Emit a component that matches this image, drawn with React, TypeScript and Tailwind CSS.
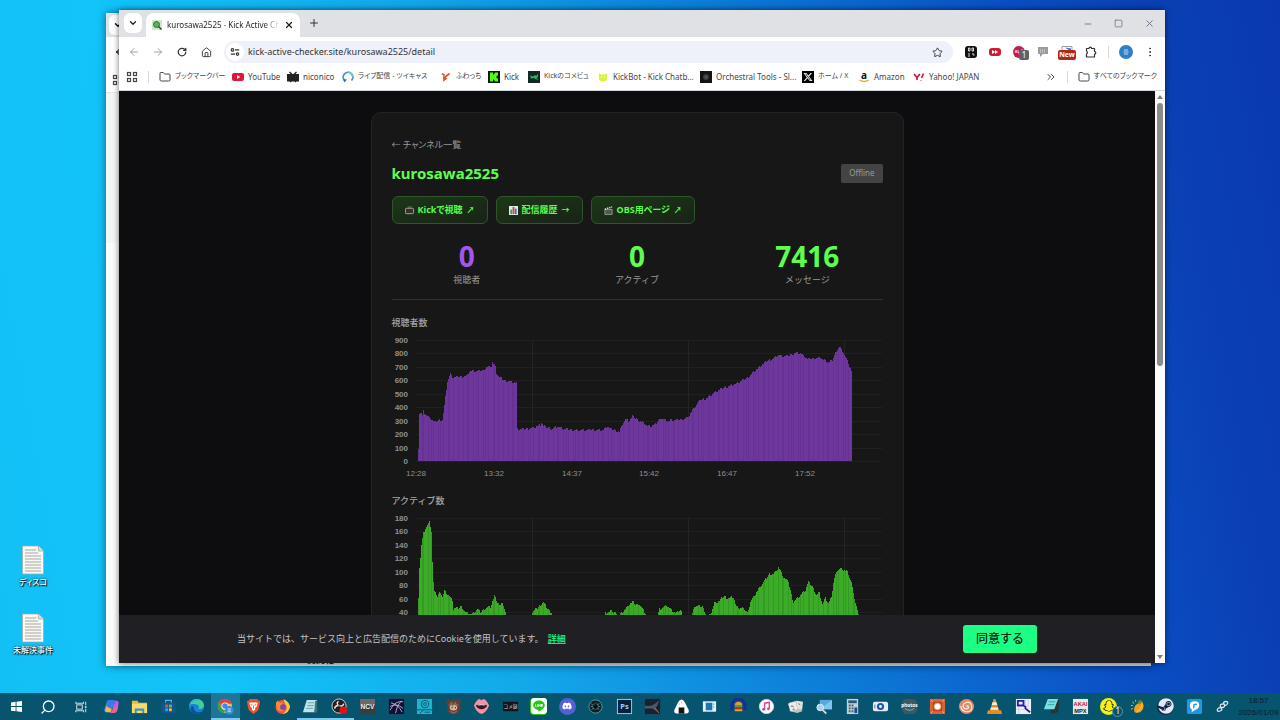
import type { ReactNode } from 'react';
import {
  ArrowLeft,
  ArrowRight,
  ChevronDown,
  ChevronsRight,
  EllipsisVertical,
  Folder,
  House,
  Minus,
  Plus,
  RotateCw,
  Search,
  Square,
  Star,
  X,
} from 'lucide-react';
import { FaDiscord, FaLine, FaSnapchat, FaSteam, FaXTwitter } from 'react-icons/fa6';

type Point = [number, number];

interface ChartProps {
  title: string;
  points: Point[];
  max: number;
  step: number;
  color: string;
  stripe: string;
  jitter: number;
}

interface BookmarkItem {
  label: string;
  width: string;
  icon: ReactNode;
}

interface TaskItem {
  name: string;
  icon: ReactNode;
  state?: 'active' | 'open';
}

const viewers: Point[] = [
  [0, 100], [1, 360], [3, 360], [4, 335], [5, 376], [6, 360], [8, 340], [11, 322], [13, 310], [16, 287],
  [19, 300], [22, 310], [24, 310], [26, 408], [27, 480], [29, 596], [32, 645], [34, 620], [36, 625], [48, 632],
  [51, 668], [65, 672], [68, 703], [73, 705], [74, 733], [77, 700], [78, 653], [81, 623], [85, 603], [95, 588],
  [98, 578], [99, 240], [105, 236], [115, 250], [122, 267], [123, 290], [125, 258], [134, 240], [139, 260], [144, 240],
  [155, 230], [169, 226], [175, 236], [185, 227], [189, 262], [192, 240], [201, 220], [204, 272], [207, 315], [210, 295],
  [214, 330], [220, 304], [225, 285], [229, 260], [232, 260], [237, 270], [242, 322], [249, 300], [262, 308], [269, 322],
  [272, 354], [277, 409], [282, 454], [289, 471], [295, 504], [305, 546], [319, 578], [329, 620], [339, 688], [349, 745],
  [355, 765], [359, 787], [369, 778], [377, 807], [382, 800], [389, 757], [402, 770], [409, 733], [414, 745], [417, 810],
  [421, 852], [425, 807], [429, 745], [433, 670],
];

const actives: Point[] = [
  [0, 63], [1, 108], [2, 121], [3, 140], [5, 158], [7, 165], [9, 169], [11, 174], [13, 161], [14, 114],
  [15, 84], [16, 69], [19, 64], [22, 71], [24, 63], [26, 71], [30, 66], [34, 57], [35, 45], [40, 45],
  [43, 49], [47, 40], [54, 37], [59, 44], [62, 40], [67, 47], [72, 48], [76, 64], [79, 55], [82, 48],
  [84, 55], [87, 39], [88, 24], [113, 24], [114, 37], [117, 48], [119, 45], [122, 50], [125, 54], [129, 45],
  [133, 40], [134, 24], [186, 24], [187, 38], [192, 41], [198, 39], [199, 24], [201, 24], [202, 38], [207, 44],
  [210, 50], [214, 55], [217, 52], [221, 52], [225, 43], [229, 34], [231, 22], [238, 28], [241, 45], [248, 50],
  [253, 43], [258, 38], [262, 43], [267, 31], [273, 31], [276, 49], [284, 48], [289, 33], [293, 40], [296, 53],
  [301, 56], [305, 64], [310, 61], [315, 63], [318, 47], [324, 46], [329, 39], [332, 56], [341, 76], [346, 86],
  [351, 97], [356, 98], [360, 107], [365, 92], [370, 85], [373, 66], [375, 55], [379, 61], [384, 69], [387, 73],
  [390, 85], [394, 78], [398, 66], [401, 69], [404, 52], [407, 61], [410, 53], [413, 61], [415, 84], [418, 102],
  [422, 105], [429, 100], [433, 84], [435, 66], [439, 43], [442, 30],
];

const times = ['12:28', '13:32', '14:37', '15:42', '16:47', '17:52'];

function valueAt(points: Point[], x: number) {
  const next = points.findIndex((p) => p[0] >= x);
  if (next <= 0) return points[0][1];
  const [x0, v0] = points[next - 1];
  const [x1, v1] = points[next];
  return v0 + ((v1 - v0) * (x - x0)) / (x1 - x0);
}

function Chart({ title, points, max, step, color, stripe, jitter }: ChartProps) {
  const top = 7;
  const height = 121;
  const ticks = Array.from({ length: max / step + 1 }, (_, i) => max - i * step);
  const last = points[points.length - 1][0];
  const bars = Array.from({ length: last + 1 }, (_, i) => {
    const noise = ((((i >> 1) * 37) % 11) - 5) / 5;
    return Math.max(0, valueAt(points, i) + noise * jitter);
  });

  return (
    <section>
      <h2 className="h-4 text-[9px] leading-4 font-medium text-[#a3a3a3]">{title}</h2>
      <svg viewBox="0 0 491 146" className="mt-0.5 block w-full" role="img" aria-label={title}>
        {ticks.map((tick, i) => {
          const y = top + Math.round((i * height) / (ticks.length - 1));
          return (
            <g key={tick}>
              <line x1="23" x2="490" y1={y + 0.5} y2={y + 0.5} stroke="#202020" />
              <text x="16" y={y + 3} textAnchor="end" fontSize="8" fontWeight="bold" fill="#8f8f8f" fontFamily="Liberation Sans, sans-serif">
                {tick}
              </text>
            </g>
          );
        })}
        {[140, 296, 452].map((x) => (
          <line key={x} x1={x + 0.5} x2={x + 0.5} y1={top} y2={top + height} stroke="#242424" />
        ))}
        {bars.map((value, i) => {
          const h = (value / max) * height;
          return (
            <rect key={i} x={26 + i} y={top + height - h} width="1" height={h} fill={(i * 7) % 5 === 0 || i % 9 === 4 ? stripe : color} shapeRendering="crispEdges" />
          );
        })}
        {times.map((time, i) => (
          <text key={time} x={24 + Math.round(i * 77.8)} y="143" textAnchor="middle" fontSize="8" fill="#8f8f8f" fontFamily="Liberation Sans, sans-serif">
            {time}
          </text>
        ))}
      </svg>
    </section>
  );
}

/* Small drawings */

function Icon({ children, box = 18 }: { children: ReactNode; box?: number }) {
  return (
    <svg viewBox={`0 0 ${box} ${box}`} className="size-full" aria-hidden="true">
      {children}
    </svg>
  );
}

function AppsGrid() {
  return (
    <Icon box={12}>
      <g fill="none" stroke="#444746" strokeWidth="1.2">
        <rect x="1.5" y="1.5" width="3" height="3" />
        <rect x="7.5" y="1.5" width="3" height="3" />
        <rect x="1.5" y="7.5" width="3" height="3" />
        <rect x="7.5" y="7.5" width="3" height="3" />
      </g>
    </Icon>
  );
}

const bookmarks: BookmarkItem[] = [
  { label: 'ブックマークバー', width: 'w-[73px] text-[7px]', icon: <Folder className="size-3 text-[#444746]" strokeWidth={2} /> },
  {
    label: 'YouTube',
    width: 'w-[55px] text-[8px]',
    icon: <Icon box={12}><rect y="2" width="12" height="8" rx="2" fill="#e0143c" /><path d="M5 4l3.200 2L5 8z" fill="#fff" /></Icon>,
  },
  {
    label: 'niconico',
    width: 'w-[55px] text-[8px]',
    icon: <Icon box={12}><path d="M0 3h3.500L2 1.200 3 .5 5.500 3h1L9 .5l1 .7L8.500 3H12v7.500H9.500l-1 1-1-1h-3l-1 1-1-1H0z" fill="#222" /></Icon>,
  },
  {
    label: 'ライブ配信 - ツイキャス',
    width: 'w-[98px] text-[7px]',
    icon: (
      <Icon box={12}>
        <path d="M2.500 9.500A4.800 4.800 0 1 1 9.500 9.500" fill="none" stroke="#3d8fd1" strokeWidth="1.800" />
        <path d="M6 1.200A4.800 4.800 0 0 1 10.800 6" fill="none" stroke="#6cc7c0" strokeWidth="1.800" />
        <path d="M1 8l4 .5-2.500 3z" fill="#2f6fb7" />
      </Icon>
    ),
  },
  {
    label: 'ふわっち',
    width: 'w-[48px] text-[7px]',
    icon: <Icon box={12}><path d="M2.500 3l1.500 1M5 6l4-3M4 6v3l2-1.500" stroke="#e2552f" strokeWidth="1.800" fill="none" strokeLinecap="round" /></Icon>,
  },
  {
    label: 'Kick',
    width: 'w-[40px] text-[8px]',
    icon: <Icon box={12}><rect width="12" height="12" fill="#0a1a05" /><path d="M2 1.500h3v2h1v-1h1v-1h3v3H9v1H8v1h1v1h1v3H7v-1H6v-1H5v2H2z" fill="#53fc18" /></Icon>,
  },
  {
    label: 'Kickのコメビュ',
    width: 'w-[69px] text-[7px]',
    icon: <Icon box={12}><rect width="12" height="12" fill="#12292a" /><path d="M2 4.500l3 1 2-1.500 1 1 2-2v3L8.500 7l2 2-3-1-1.500-1-3 .5z" fill="#2fb457" /></Icon>,
  },
  {
    label: 'KickBot - Kick Chatb...',
    width: 'w-[103px] text-[8px]',
    icon: <Icon box={12}><path d="M2 2l2 1.500h4L10 2v7l-2 1H4L2 9z" fill="#d5f53b" /><path d="M4 6h1M7 6h1" stroke="#fff" /></Icon>,
  },
  {
    label: 'Orchestral Tools - Sl...',
    width: 'w-[102px] text-[8px]',
    icon: <Icon box={12}><rect width="12" height="12" fill="#141414" /><circle cx="6" cy="6" r="3" fill="#3a3a3a" /><circle cx="6" cy="6" r="1.500" fill="#555" /></Icon>,
  },
  {
    label: 'ホーム / X',
    width: 'w-[56px] text-[7px]',
    icon: <span className="flex size-3 items-center justify-center bg-black text-white"><FaXTwitter className="size-2.5" /></span>,
  },
  {
    label: 'Amazon',
    width: 'w-[55px] text-[8px]',
    icon: (
      <Icon box={12}>
        <text x="6" y="8" textAnchor="middle" fontSize="10" fontWeight="bold" fill="#111" fontFamily="Noto Sans, sans-serif">a</text>
        <path d="M1.500 9q4.500 3 9 .2" fill="none" stroke="#d6b62e" strokeWidth="1.400" />
      </Icon>
    ),
  },
  {
    label: 'Yahoo! JAPAN',
    width: 'w-[80px] text-[8px]',
    icon: <Icon box={12}><path d="M1 3l3 3.500V9M7 3L4 6.500M10.500 2.500L8.500 7M8 9v.5" stroke="#c2113a" strokeWidth="1.600" fill="none" /></Icon>,
  },
];

const tasks: TaskItem[] = [
  {
    name: 'Copilot',
    icon: (
      <Icon>
        <path d="M6 2h6l-3 13H4c-3 0-3-2-2-5L4 4q.6-2 2-2z" fill="#2a8ee8" />
        <path d="M4 8L2.500 12q-1 3 2 3H8l1-3z" fill="#f4b942" />
        <path d="M12 3h2q3 0 2.500 3L15 13q-1 3-3 3H7l2.500-2z" fill="#c45be0" />
        <path d="M12 10l4-1-1 4q-1 3-3 3H8z" fill="#f0608a" />
        <path d="M6 2h5q1.500 0 2 2l.5 2H9L7.500 11 4 9z" fill="#3f6df0" opacity=".7" />
      </Icon>
    ),
  },
  {
    name: 'エクスプローラー',
    icon: <Icon><path d="M1 3h6l1 2h9v11H1z" fill="#e8b93a" /><path d="M1 6h16v10H1z" fill="#fbd968" /><path d="M4 11h10v5h-2v-2.500H6V16H4z" fill="#3c8fc4" /></Icon>,
  },
  {
    name: 'Microsoft Store',
    icon: (
      <Icon>
        <path d="M6 5V2.500h6V5" fill="none" stroke="#49b4ea" strokeWidth="1.300" />
        <path d="M1.500 5h15v9q0 2-2 2h-11q-2 0-2-2z" fill="#14558f" />
        <path d="M5.500 7h3v3h-3z" fill="#f05133" /><path d="M9.500 7h3v3h-3z" fill="#80bc2a" />
        <path d="M5.500 11h3v3h-3z" fill="#2aa5ea" /><path d="M9.500 11h3v3h-3z" fill="#fcbc1a" />
      </Icon>
    ),
  },
  {
    name: 'Edge',
    icon: (
      <Icon>
        <circle cx="9" cy="9" r="8" fill="#1583d6" />
        <path d="M1.500 8Q3 1 9 1c5 0 8 3.500 8 7 0 3-3 4-6 3.500 1.500-2 0-5-3-5S2.500 6 1.500 8z" fill="#43cf92" />
        <path d="M1.500 8Q3 1 9 1c2 0 4 1 5 2-5-1.500-9 0-12.500 5z" fill="#2bb6dc" />
        <path d="M6 9c-1 5 5 8 9 5-4 5-13 3-12-3 .3-2 1.500-3 3-2z" fill="#0c4f9e" />
      </Icon>
    ),
  },
  {
    name: 'Chrome',
    state: 'active',
    icon: (
      <Icon>
        <circle cx="8.500" cy="8.500" r="7.500" fill="#f2c130" />
        <path d="M1.500 5a8 8 0 0 1 14.500 1H8.500L5.500 10z" fill="#de4437" />
        <path d="M1.500 5L6 12l2.500 1-1 3A7.500 7.500 0 0 1 1.500 5z" fill="#2ea255" />
        <circle cx="8.500" cy="8.500" r="3.800" fill="#fff" /><circle cx="8.500" cy="8.500" r="2.900" fill="#4285f4" />
        <circle cx="13" cy="13" r="4.500" fill="#2f8fdb" /><path d="M11 11.500h4M11.500 13h3M11 14.500h4" stroke="#d6ecfb" strokeWidth=".8" />
      </Icon>
    ),
  },
  {
    name: 'Brave',
    icon: <Icon><path d="M5 1h8l1.500 2 1.500.5-.5 3L14 13l-5 4-5-4L2.500 6.500l-.5-3L3.500 3z" fill="#f0502c" /><path d="M4.500 5l3-.5L9 5l1.500-.5 3 .5-1 4-2 1.500L11 12l-2 2-2-2 .5-1.500-2-1.500z" fill="#fff" /><path d="M6 7l2 .5M12 7l-2 .5M9 8v3" stroke="#f0502c" /></Icon>,
  },
  {
    name: 'Firefox',
    icon: (
      <Icon>
        <circle cx="9" cy="9.500" r="7.500" fill="#f5533d" />
        <path d="M10 1q6 3 7 8-1 7-8 8 6-4 4-9-2-2-3-7z" fill="#fdc93b" />
        <path d="M2 5l2-2 2 2h4L8 7l3 1q-1 3-3 2-1 3 3 3-5 3-8-2z" fill="#ff8a2c" />
        <circle cx="9.500" cy="9.500" r="3" fill="#7747c9" />
      </Icon>
    ),
  },
  { name: 'メモ帳', state: 'open', icon: <Icon><path d="M5 2h11l-3 13H1z" fill="#bfe3e6" /><path d="M14 3l2 0v12l-3 1z" fill="#45717a" /><path d="M6 5h7M5.500 8h7M4.500 11h7" stroke="#5fa7b1" /></Icon> },
  {
    name: 'OBS',
    state: 'open',
    icon: <Icon><circle cx="8.500" cy="8.500" r="7.500" fill="#241f22" stroke="#d0d0d0" /><path d="M8 3.500q-2.500 1.500-.5 4M8 8q-4 0-4 3.500M9 8q3.500 1.500 4.500-2" fill="none" stroke="#e8e8e8" strokeWidth="1.500" /><circle cx="13" cy="13" r="4" fill="#e50f13" /></Icon>,
  },
  { name: 'NCV', icon: <Icon><rect x="1" y="1" width="16" height="16" fill="#3b3b3b" /><rect x="1" y="1" width="16" height="6" fill="#6a6a6a" /><text x="9" y="12" textAnchor="middle" fontSize="7" fontWeight="bold" fill="#eee" fontFamily="Liberation Sans, sans-serif">NCV</text></Icon> },
  { name: 'スケッチ', icon: <Icon><rect x="1" y="1" width="16" height="16" fill="#120f33" /><path d="M2 13Q8 2 16 4M3 5q8 2 12 10M2 9q7-4 14 2M8 16q1-8 6-13" fill="none" stroke="#c5bde8" strokeWidth=".9" /></Icon> },
  { name: 'カメラ', icon: <Icon><rect x="1" y="1" width="16" height="16" fill="#20b1cb" /><circle cx="9.500" cy="6.500" r="4" fill="none" stroke="#0a5a74" /><circle cx="9.500" cy="6.500" r="1.500" fill="none" stroke="#0a5a74" /><path d="M1 12.500h16M4 16l4-3M9 15h6" stroke="#0a5a74" /></Icon> },
  { name: 'キャラクター', icon: <Icon><path d="M1 5l2-3 3 0 3-1 4 1 3-1 1 4-1 2 1 4-3 5-4 1H6l-3-2-1-4 1-3z" fill="#5b4237" /><ellipse cx="9" cy="10" rx="4" ry="3.200" fill="#e0b49c" /><path d="M4 8l3-3 1 3 3-3 1 3 2-1M5 14l4 2 4-2" stroke="#8b6550" strokeWidth="1.500" fill="none" /><path d="M7.500 9.500v1.500M11 9.500v1.500" stroke="#222" /></Icon> },
  { name: 'リップ', icon: <Icon><path d="M1 8q3-7 6-7l2 1.500L11 1q3 0 6 7-3 8-8 9-5-1-8-9z" fill="#f492a5" /><path d="M3 8q6-3 12 0-2 4-6 4T3 8z" fill="#3c1626" /><path d="M5.500 7.500q3.500-1 7 0" stroke="#fff" fill="none" /></Icon> },
  { name: 'コメント', icon: <Icon><rect x="1" y="4" width="16" height="10" fill="#151515" /><text x="9" y="11" textAnchor="middle" fontSize="5" fill="#ddd" fontFamily="Noto Sans CJK JP, sans-serif">コメ録</text></Icon> },
  { name: 'LINE', icon: <span className="flex size-full items-center justify-center rounded-sm bg-[#22c714] text-white"><FaLine className="size-4" /></span> },
  { name: 'Discord', icon: <span className="flex size-full items-center justify-center rounded-full bg-[#5360d8] text-white"><FaDiscord className="size-2.5" /></span> },
  { name: 'レンズ', icon: <Icon><circle cx="9" cy="9" r="7" fill="#121e22" stroke="#4e9aa0" /><circle cx="9" cy="9" r="3" fill="#0a1114" stroke="#37666b" /><path d="M4 6l2 1M4 9h2M5 12l2-1M13 6l-2 1M14 9h-2M13 12l-2-1" stroke="#7fb6b0" strokeWidth=".7" /></Icon> },
  { name: 'Photoshop', icon: <Icon><rect x="1.500" y="1.500" width="15" height="15" fill="#04203a" stroke="#8fd0f5" /><text x="9" y="12" textAnchor="middle" fontSize="8" fontWeight="bold" fill="#9bd6f8" fontFamily="Noto Sans, sans-serif">Ps</text></Icon> },
  { name: 'スタジオ', icon: <Icon><rect x="1" y="1" width="16" height="16" fill="#17222e" /><path d="M1 8q8 2 15-6-2 8-4 8l4 6-7-5-8 0z" fill="#49586a" /><path d="M11 10l5 6" stroke="#c3663f" /></Icon> },
  { name: 'おにぎり', icon: <Icon><path d="M9 1.500q2 0 3.500 3l4 8q1 4-2.500 4H4q-3.500 0-2.500-4l4-8q1.500-3 3.500-3z" fill="#fff" /><path d="M6 10h6v6.500H6z" fill="#151515" /><path d="M9 4v2M7 6v1" stroke="#d6bda0" /></Icon> },
  { name: 'ウィンドウ', icon: <Icon><rect x="2" y="3.500" width="14" height="11" fill="#e7f1f7" /><rect x="5" y="5" width="7" height="8" fill="#1577b5" /><path d="M13.500 6v1M13.500 9v1" stroke="#385c70" /></Icon> },
  { name: 'バーガー', icon: <Icon><path d="M2 13V8a7 7 0 0 1 14 0v5" fill="none" stroke="#172d96" strokeWidth="3" /><path d="M5 8q0-4 4-4t4 4z" fill="#e39b3c" /><path d="M5 9h8" stroke="#53a944" strokeWidth="1.500" /><path d="M5 11h8" stroke="#c92d27" strokeWidth="2" /><path d="M5 12h8v2H5z" fill="#eaa33f" /></Icon> },
  { name: 'iTunes', icon: <Icon><circle cx="9" cy="9" r="7.500" fill="#fff" stroke="#cfd8ee" /><path d="M7 12V5.500l5-1V11" fill="none" stroke="#de3f9a" strokeWidth="1.500" /><circle cx="6" cy="12" r="1.500" fill="#8b4be3" /><circle cx="11" cy="11.500" r="1.500" fill="#e8445c" /></Icon> },
  { name: 'カード', icon: <Icon><path d="M2 5l8-2 6 2v9l-5 2-8-2z" fill="#bfc2bd" /><path d="M1 6l8-2 2 8-7 2z" fill="#ececea" /><path d="M10 3l7 1-1 8-5-1z" fill="#e4e4df" /><path d="M4 9q2-2 3 1M12 6l2 1M6 12h2" stroke="#666" fill="none" /></Icon> },
  { name: 'リモート検索', icon: <Icon><rect x="5" y="2" width="13" height="10" fill="#55a9dc" /><path d="M5 12l13-10v10z" fill="#83c6ed" /><circle cx="5.500" cy="10" r="3.500" fill="#a7d2ea" stroke="#e3eef5" /><path d="M8 12.500l4 4" stroke="#ced8dd" strokeWidth="2" /></Icon> },
  { name: '電卓', icon: <Icon><rect x="3" y="1" width="12" height="16" fill="#bfd2dc" /><rect x="4.500" y="2.500" width="9" height="3" fill="#2b5a78" /><path d="M5 8h2M8 8h2M5 11h2M8 11h2M5 14h2M8 14h2" stroke="#52616a" strokeWidth="2" /><rect x="11" y="10" width="3" height="6" fill="#1c4d8a" /></Icon> },
  { name: 'レコーダー', icon: <Icon><rect x="1" y="4" width="16" height="10" rx="2" fill="#e6ecf7" /><circle cx="9" cy="9" r="3.800" fill="#2154b5" /><circle cx="9" cy="9" r="1.500" fill="#fff" /><path d="M3 7v4" stroke="#4b6fb5" /></Icon> },
  { name: 'Amazon Photos', icon: <Icon><rect x="1" y="1" width="16" height="16" rx="5" fill="#3d5860" /><text x="9" y="9" textAnchor="middle" fontSize="5" fontWeight="bold" fill="#fff" fontFamily="Noto Sans, sans-serif">photos</text><path d="M4 11q5 4 10 0" stroke="#51c2c1" fill="none" /></Icon> },
  { name: 'ブラシ', icon: <Icon><rect x="1" y="1" width="16" height="16" fill="#dd6234" /><rect x="4" y="4" width="10" height="10" fill="#b9441f" /><circle cx="9" cy="9" r="3.500" fill="#fff" stroke="#f2a36d" /><path d="M2 2l2 2M16 2l-2 2M2 16l2-2M16 16l-2-2" stroke="#f4b58b" /></Icon> },
  { name: '渦巻き', icon: <Icon><circle cx="9" cy="9" r="8" fill="#e58868" /><path d="M9 9q1.500-1.500 2 .5t-2.500 2-3-3 4-4 5 4.500-5 5.500-6.500-6" fill="none" stroke="#fff0e8" strokeWidth="1.200" /></Icon> },
  { name: 'VLC', icon: <Icon><path d="M2 13h14l1 4H1z" fill="#e58b22" /><path d="M8 1h2l4 13H4z" fill="#f08c1c" /><path d="M7 4.500h4l1 3H6zM5.300 10h7.400l.6 2.500H4.500z" fill="#f5ede2" /></Icon> },
  { name: 'エディター', icon: <Icon><rect x="1" y="1" width="16" height="16" fill="#edf0fa" /><path d="M3 3h6v5H3zM9 8l2 1v2l5 4" fill="none" stroke="#271c9c" strokeWidth="2" /><path d="M11 1v7M14 1v9M1 12h9M4 9v8" stroke="#b6b9d8" strokeWidth=".6" /></Icon> },
  { name: '付箋', icon: <Icon><path d="M5 2h12l-1 13-7 2z" fill="#263538" /><path d="M5 1h11l-4 11H1z" fill="#7cdde3" /><path d="M6 4h7M5 7h7" stroke="#3a9fa8" /></Icon> },
  { name: 'AKAI MPX', icon: <Icon><rect x="1" y="1" width="16" height="16" fill="#e9e9e9" /><text x="9" y="8.500" textAnchor="middle" fontSize="6" fontWeight="bold" fill="#c4173a" fontFamily="Liberation Sans, sans-serif">AKAI</text><text x="9" y="15.500" textAnchor="middle" fontSize="6" fontWeight="bold" fill="#222" fontFamily="Liberation Sans, sans-serif">MPX</text></Icon> },
  {
    name: 'Snapchat',
    icon: (
      <span className="relative flex size-full items-center justify-center rounded-full bg-[#f5f016] text-black">
        <FaSnapchat className="size-3" />
        <span className="absolute -right-1.5 -bottom-0.5 flex size-[11px] items-center justify-center rounded-full border border-[#5c9aab] bg-[#0d5268] text-[8px] leading-none text-white">1</span>
      </span>
    ),
  },
  { name: 'マンゴー', icon: <Icon><path d="M14 4q3 5 0 9t-8 2Q4 9 9 6q3-2 5-2z" fill="#f0a020" /><path d="M9 4q4-4 5 0l-3 3z" fill="#5c8b31" /><path d="M4 4l1 2M2 8h2M2 12l2-1M7 2v2" stroke="#f2c037" /><path d="M8 15q5-2 6-8" stroke="#f9cd48" fill="none" /></Icon> },
  { name: 'Steam', icon: <span className="flex size-full items-center justify-center rounded-full bg-[#10254b] text-[#e2eaf1]"><FaSteam className="size-4" /></span> },
  { name: 'チャット', icon: <Icon><rect x="1" y="1" width="16" height="16" rx="2" fill="#2198e2" /><path d="M9 3.500q5 0 5 4T9 13l-3 2 .3-2.500Q4 11 4 8q0-4.500 5-4.500z" fill="#fff" /><path d="M8 11l.5-4 3-.5" stroke="#2198e2" strokeWidth="1.400" fill="none" /></Icon> },
  { name: 'リンク', icon: <Icon><path d="M4 14q-1.500-2 1-3.500l3 0q1 2-1 3t-3 .5zM7 10q-1-3 1-3.500h3q1 2-1 3.500zM10 6.500Q9.500 4 12 3.500q3 0 2.500 2T12 8" fill="none" stroke="#d9e9ee" strokeWidth="1.300" /></Icon> },
];

function DesktopFile({ name }: { name: string }) {
  return (
    <button className="flex w-16 flex-col items-center gap-px">
      <svg viewBox="0 0 22 30" className="h-[30px] w-[22px]" aria-hidden="true">
        <path d="M.5 1h16l5 5v23H.5z" fill="#f7f7f5" stroke="#aaa69c" strokeWidth=".7" />
        <path d="M16.500 1v5h5" fill="#dcdcd8" stroke="#aaa69c" strokeWidth=".7" />
        <path d="M3 5h11M3 8h13M3 11h16M3 14h16M3 17h16M3 20h16M3 23h16M3 26h16" stroke="#aba79f" />
      </svg>
      <span className="text-[8px] leading-3 font-medium whitespace-nowrap text-white [font-feature-settings:'palt'] [text-shadow:1px_1px_1px_#000,0_0_2px_#000]">{name}</span>
    </button>
  );
}

function BackWindow() {
  return (
    <div className="absolute top-[13px] right-[129px] bottom-[27px] left-[106px] flex flex-col overflow-hidden bg-white shadow-[0_0_8px_rgba(0,0,0,0.5)]">
      <div className="flex h-6 items-center bg-[#dfe1e5] pl-[3px]">
        <span className="flex h-5 w-[18px] items-center justify-center rounded-md bg-white"><ChevronDown className="size-2.5" strokeWidth={3} /></span>
      </div>
      <div className="flex h-[30px] items-center pl-2"><ArrowLeft className="size-3" /></div>
      <div className="flex h-[26px] items-center border-b border-gray-200 pl-1.5"><span className="size-3"><AppsGrid /></span></div>
      <div className="h-[150px] bg-[#f5f5f5]" />
      <div className="flex flex-1 items-end gap-1.5 bg-gradient-to-r from-white from-0% via-[#f4f4f4] via-2% to-[#c8ccd0] to-30% pl-[201px] text-[9px] leading-3 font-bold text-[#222]">
        <span>質問箱</span>
        <span>▼</span>
      </div>
    </div>
  );
}

function TabStrip() {
  return (
    <div className="flex h-[27px] shrink-0 items-end bg-[#dfe1e5] pl-[5px]">
      <button aria-label="タブを検索" className="mb-1 flex h-5 w-[18px] items-center justify-center rounded-md bg-white">
        <ChevronDown className="size-2.5 text-[#1f1f1f]" strokeWidth={3} />
      </button>
      <div className="ml-1 flex h-6 w-[154px] items-center rounded-t-lg bg-white px-1.5">
        <span className="size-[10px] shrink-0">
          <Icon box={10}>
            <rect width="10" height="10" fill="#cfe6cf" />
            <circle cx="4.500" cy="4.500" r="3" fill="#57b757" stroke="#2b6e39" />
            <path d="M6.500 6.500l3 3" stroke="#2a3b2c" strokeWidth="1.300" />
          </Icon>
        </span>
        <span className="ml-[5px] flex-1 overflow-hidden text-[8px] whitespace-nowrap text-[#1f1f1f] [mask-image:linear-gradient(to_right,#000_85%,transparent)]">
          kurosawa2525 - Kick Active Che
        </span>
        <button aria-label="閉じる" className="ml-1 shrink-0"><X className="size-2.5 text-[#1f1f1f]" strokeWidth={3} /></button>
      </div>
      <button aria-label="新しいタブ" className="mb-2 ml-2"><Plus className="size-3 text-[#333]" /></button>
      <div className="ml-auto flex h-full items-center">
        <button aria-label="最小化" className="flex w-[31px] justify-center"><Minus className="size-2.5 text-gray-500" /></button>
        <button aria-label="最大化" className="flex w-[31px] justify-center"><Square className="size-[9px] text-gray-500" strokeWidth={2} /></button>
        <button aria-label="ウィンドウを閉じる" className="flex w-[31px] justify-center"><X className="size-[11px] text-gray-500" strokeWidth={2} /></button>
      </div>
    </div>
  );
}

function Toolbar() {
  return (
    <div className="flex h-[30px] shrink-0 items-center bg-white pl-[3px]">
      <button aria-label="戻る" className="flex w-6 justify-center"><ArrowLeft className="size-3 text-gray-400" /></button>
      <button aria-label="進む" className="flex w-6 justify-center"><ArrowRight className="size-3 text-gray-400" /></button>
      <button aria-label="再読み込み" className="flex w-6 justify-center"><RotateCw className="size-2.5 text-[#333]" strokeWidth={3} /></button>
      <button aria-label="ホーム" className="flex w-6 justify-center"><House className="size-[11px] text-[#333]" /></button>
      <div className="ml-[6px] flex h-[22px] flex-1 items-center rounded-full bg-[#eef0fa] pr-2.5 pl-0.5">
        <span className="flex size-[18px] items-center justify-center rounded-full bg-white">
          <svg viewBox="0 0 12 12" className="size-[10px]" fill="none" stroke="#333" strokeWidth="1.400" aria-hidden="true">
            <circle cx="3" cy="3.500" r="1.500" /><path d="M6 3.500h5M1 8.500h5" /><circle cx="9" cy="8.500" r="1.500" />
          </svg>
        </span>
        <input
          aria-label="アドレス"
          defaultValue="kick-active-checker.site/kurosawa2525/detail"
          className="ml-1 flex-1 bg-transparent text-[9px] text-[#333] outline-none"
        />
        <Star className="size-[11px] text-[#333]" />
      </div>
      <div className="ml-1.5 flex items-center">
        <span className="flex w-6 justify-center"><span className="size-3"><Icon box={12}><rect width="12" height="12" rx="3" fill="#111" /><path d="M3.500 2h1.500v3H3.500zM7 2h1.500v3H7zM4 7v4M8 7v2h1.500" stroke="#eee" strokeWidth=".9" fill="none" /></Icon></span></span>
        <span className="flex w-6 justify-center"><span className="size-3"><Icon box={12}><rect y="2" width="12" height="8" rx="3" fill="#cf1b31" /><path d="M3 4l3 2-3 2zM6 4l3 2-3 2z" fill="#fff" /></Icon></span></span>
        <span className="relative flex w-6 justify-center">
          <span className="size-3"><Icon box={12}><circle cx="6" cy="6" r="6" fill="#c5194f" /><path d="M2 7l1-3 1 3M5 4v3h2M8 4h2M8 6h2" stroke="#f7c7d5" fill="none" /></Icon></span>
          <span className="absolute top-1 right-0.5 flex size-[10px] items-center justify-center rounded-xs bg-[#5f6368] text-[8px] text-white">1</span>
        </span>
        <span className="flex w-6 justify-center"><span className="size-3"><Icon box={12}><path d="M1 1h10v7H6l-3 3V8H1z" fill="#9b9b9b" /><path d="M3 4h6M3 6h6" stroke="#ddd" strokeDasharray="1 1" /></Icon></span></span>
        <span className="relative flex w-6 justify-center">
          <span className="size-3"><Icon box={12}><path d="M1 0.500h10v6H1z" fill="#fff" stroke="#9aa0a6" /><path d="M4 1.500l6 1v3z" fill="#2a72c8" /></Icon></span>
          <span className="absolute top-1 left-1/2 flex h-[10px] w-[18px] -translate-x-1/2 items-center justify-center rounded-xs bg-[#b3261e] text-[7px] font-bold text-white">New</span>
        </span>
        <button aria-label="拡張機能" className="flex w-6 justify-center">
          <svg viewBox="0 0 12 12" className="size-3" fill="none" stroke="#333" strokeWidth="1.200" strokeLinejoin="round" aria-hidden="true">
            <path d="M1.500 2.500H4a1.300 1.300 0 0 1 2.600 0H9.500v3a1.300 1.300 0 0 1 0 2.600v2.900h-8V8a1.500 1.500 0 0 0 0-2.800z" />
          </svg>
        </button>
        <span className="mx-[5px] h-3 w-px bg-[#d5d8de]" />
        <button aria-label="プロフィール" className="flex w-6 justify-center">
          <span className="size-[14px]"><Icon box={14}><circle cx="7" cy="7" r="7" fill="#2f7fc8" /><path d="M5 5h4M4.500 7h5M5 9h4" stroke="#cfe5f7" strokeWidth=".9" /></Icon></span>
        </button>
        <button aria-label="メニュー" className="mr-[3px] flex w-6 justify-center"><EllipsisVertical className="size-3 text-[#333]" /></button>
      </div>
    </div>
  );
}

function BookmarksBar() {
  return (
    <nav className="flex h-6 shrink-0 items-center border-b border-gray-300 bg-white pb-1 pl-[7px] text-[#444746] [font-feature-settings:'palt']">
      <span className="size-3"><AppsGrid /></span>
      <span className="mx-[10px] h-3 w-px bg-[#d5d8de]" />
      {bookmarks.map((item) => (
        <a key={item.label} href="#" className={`flex shrink-0 items-center gap-1 whitespace-nowrap ${item.width}`}>
          <span className="size-3 shrink-0">{item.icon}</span>
          {item.label}
        </a>
      ))}
      <button aria-label="その他" className="ml-auto"><ChevronsRight className="size-3" /></button>
      <span className="mx-[10px] h-3 w-px bg-[#d5d8de]" />
      <a href="#" className="flex items-center gap-1 pr-2 text-[7px] whitespace-nowrap">
        <Folder className="size-3" />
        すべてのブックマーク
      </a>
    </nav>
  );
}

function ActionButton({ icon, label, arrow }: { icon: ReactNode; label: string; arrow: string }) {
  return (
    <a
      href="#"
      className="flex h-7 items-center gap-1 rounded-md border border-[#30552c] bg-gradient-to-br from-[#1c3716] to-[#182317] px-3 text-[9px] font-bold whitespace-nowrap text-[#55ff4c] [font-feature-settings:'palt']"
    >
      <span className="size-[9px]">{icon}</span>
      {label}
      <span className="text-[8px]">{arrow}</span>
    </a>
  );
}

function ChannelCard() {
  return (
    <div className="mx-auto w-full max-w-[533px] rounded-[10px] border border-[#232323] bg-[#171717] p-5 text-[#999]">
      <a href="#" className="block text-[9px] leading-6 [font-feature-settings:'palt']">← チャンネル一覧</a>
      <div className="flex h-8 items-center justify-between">
        <h1 className="text-[15px] font-bold text-[#5dff50]">kurosawa2525</h1>
        <span className="flex h-[19px] items-center rounded-xs bg-[#444] px-2 text-[8px]">Offline</span>
      </div>
      <div className="mt-[7px] flex gap-2">
        <ActionButton
          label="Kickで視聴"
          arrow="↗"
          icon={<Icon box={10}><path d="M3 0l2 2 2-2" fill="none" stroke="#888" /><rect x=".5" y="2.500" width="9" height="6" rx="1" fill="#38302c" stroke="#b2aaa5" /></Icon>}
        />
        <ActionButton
          label="配信履歴"
          arrow="→"
          icon={<Icon box={10}><rect width="10" height="10" fill="#e4e8ea" /><path d="M2.500 9V4" stroke="#3b9c54" strokeWidth="2" /><path d="M5 9V1" stroke="#cf4141" strokeWidth="2" /><path d="M7.500 9V3" stroke="#3473b9" strokeWidth="2" /></Icon>}
        />
        <ActionButton
          label="OBS用ページ"
          arrow="↗"
          icon={<Icon box={10}><rect x="1" y="4" width="8" height="5.500" fill="#555" stroke="#b5b5b5" strokeWidth=".7" /><path d="M1 3.500L9 1" stroke="#ddd" strokeWidth="1.800" strokeDasharray="1.500 1" /></Icon>}
        />
      </div>
      <dl className="mt-4 grid grid-cols-3 gap-5 border-b border-[#303030] pb-[11px] text-center">
        <div className="flex flex-col-reverse">
          <dt className="text-[9px] leading-4">視聴者</dt>
          <dd className="text-[28px] leading-8 font-bold text-[#a356ee]">0</dd>
        </div>
        <div className="flex flex-col-reverse">
          <dt className="text-[9px] leading-4">アクティブ</dt>
          <dd className="text-[28px] leading-8 font-bold text-[#5dff4b]">0</dd>
        </div>
        <div className="flex flex-col-reverse">
          <dt className="text-[9px] leading-4">メッセージ</dt>
          <dd className="text-[28px] leading-8 font-bold text-[#5dff4b]">7416</dd>
        </div>
      </dl>
      <div className="mt-[15px] flex flex-col gap-3.5">
        <Chart title="視聴者数" points={viewers} max={900} step={100} color="#6e379c" stripe="#663294" jitter={9} />
        <Chart title="アクティブ数" points={actives} max={180} step={20} color="#3cab28" stripe="#349a23" jitter={2} />
      </div>
    </div>
  );
}

function CookieBanner() {
  return (
    <div className="absolute inset-x-0 bottom-0 flex h-12 items-center bg-[#201f24]">
      <div className="mx-auto flex w-full max-w-[800px] items-center justify-between">
        <p className="text-[9px] text-[#c4c4c6]">
          当サイトでは、サービス向上と広告配信のためにCookieを使用しています。
          <a href="#" className="ml-1 font-bold text-[#1ce57a] underline">詳細</a>
        </p>
        <button className="h-7 rounded-[3px] bg-[#1dff84] px-[13px] text-xs font-medium text-[#0a2314]">同意する</button>
      </div>
    </div>
  );
}

function BrowserWindow() {
  return (
    <div className="absolute top-[10px] right-[115px] bottom-[30px] left-[119px] flex flex-col overflow-hidden bg-white shadow-[0_0_6px_rgba(0,0,0,0.55)]">
      <TabStrip />
      <Toolbar />
      <BookmarksBar />
      <div className="flex min-h-0 flex-1">
        <main className="relative flex-1 overflow-hidden bg-[#0d0d0f] pt-[21px]">
          <ChannelCard />
          <CookieBanner />
        </main>
        <div className="flex w-[10px] flex-col items-center justify-between bg-[#fcfcfc] py-1">
          <svg viewBox="0 0 6 4" className="h-1 w-1.5" aria-hidden="true"><path d="M0 4l3-4 3 4z" fill="#7c7c7c" /></svg>
          <div className="my-1 flex-1"><div className="h-[48%] w-1.5 rounded-full bg-[#8b8b8b]" /></div>
          <svg viewBox="0 0 6 4" className="h-1 w-1.5" aria-hidden="true"><path d="M0 0l3 4 3-4z" fill="#7c7c7c" /></svg>
        </div>
      </div>
    </div>
  );
}

function Taskbar() {
  return (
    <footer className="flex h-[27px] shrink-0 items-stretch bg-[#07546f]">
      <button aria-label="スタート" className="flex w-8 items-center justify-center">
        <svg viewBox="0 0 12 12" className="size-[11px]" fill="#fff" aria-hidden="true"><path d="M0 1.500l5-.7v4.700H0zM6 .7L12 0v5.500H6zM0 6.500h5v4.700l-5-.7zM6 6.500h6V12l-6-.8z" /></svg>
      </button>
      <button aria-label="検索" className="flex w-8 items-center justify-center text-white"><Search className="size-4 -scale-x-100" /></button>
      <button aria-label="タスク ビュー" className="flex w-[33px] items-center justify-center">
        <svg viewBox="0 0 14 14" className="size-3" fill="none" stroke="#c8dde4" strokeWidth="1.200" aria-hidden="true">
          <rect x="2" y="4.500" width="6.500" height="5" /><path d="M1 1v1.500h9V1M1 13v-1.500h9V13M12.500 1v4M12.500 9v4" /><path d="M12.500 6v2" strokeWidth="2" />
        </svg>
      </button>
      {tasks.map((task) => (
        <button
          key={task.name}
          aria-label={task.name}
          className={`flex flex-1 items-center justify-center border-b-2 pt-px ${
            task.state === 'active' ? 'border-[#7cc8f0] bg-[#1d7597]' : task.state === 'open' ? 'border-[#7cc8f0]' : 'border-transparent'
          }`}
        >
          <span className="size-[17px]">{task.icon}</span>
        </button>
      ))}
      <div className="flex w-[43px] flex-col items-center justify-center font-['Liberation_Sans',sans-serif] text-[8px] leading-3 whitespace-nowrap text-[#06202b]">
        <span>18:57</span>
        <span>2026/01/09</span>
      </div>
    </footer>
  );
}

export default function App() {
  return (
    <div className="flex h-screen flex-col overflow-hidden bg-[linear-gradient(80deg,#12c0f6_0%,#12c4fa_16%,#12a8ea_38%,#0c7cd8_60%,#0b50c6_80%,#0a40b4_91%,#0a38b0_100%)] font-['Noto_Sans','Noto_Sans_CJK_JP',sans-serif]">
      <div className="relative min-h-0 flex-1">
        <div className="flex h-full flex-col justify-end gap-[25px] px-px pb-[37px]">
          <DesktopFile name="ディスコ" />
          <DesktopFile name="未解決事件" />
        </div>
        <BackWindow />
        <BrowserWindow />
      </div>
      <Taskbar />
    </div>
  );
}
